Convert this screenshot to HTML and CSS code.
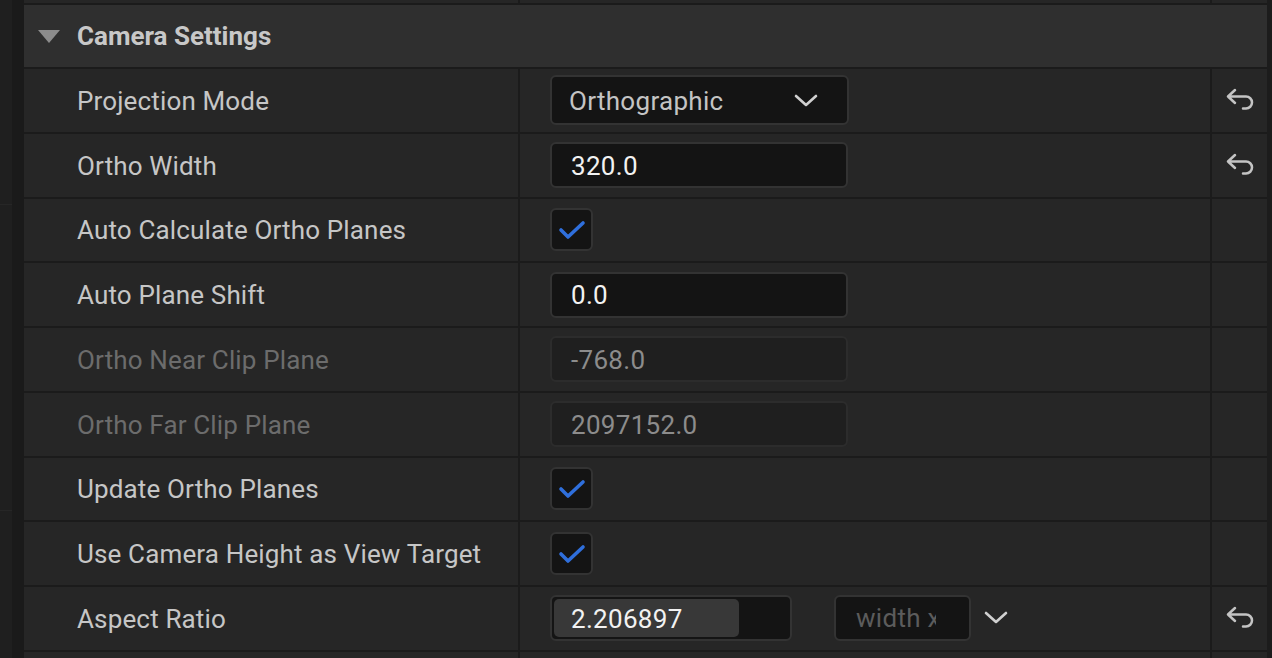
FILE: index.html
```html
<!DOCTYPE html>
<html>
<head>
<meta charset="utf-8">
<link rel="stylesheet" href="styles.css">
</head>
<body>
<div class="app">
  <div class="gutter"><div class="gutter-inner"></div></div>
  <div class="panel">
    <div class="row row-stub"><div class="cell"></div><div class="cell"></div><div class="cell"></div></div>
    <div class="header">
      <svg class="caret" width="24" height="15" viewBox="0 0 24 15"><polygon points="1,1 23,1 12,14" fill="#8c8c8c"/></svg>
      <span class="header-title">Camera Settings</span>
    </div>

    <div class="row">
      <div class="cell label">Projection Mode</div>
      <div class="cell value">
        <div class="combo"><span>Orthographic</span>
          <svg class="chev" width="24" height="14" viewBox="0 0 24 14"><polyline points="2,2 12,11 22,2" fill="none" stroke="#d0d0d0" stroke-width="2.6" stroke-linecap="round" stroke-linejoin="round"/></svg>
        </div>
      </div>
      <div class="cell reset">
        <svg width="30" height="24" viewBox="0 0 30 24"><path d="M9 2 L2 8.5 L9 15 M2 8.5 H20 A6 6 0 0 1 20 20.5 H17" fill="none" stroke="#c4c4c4" stroke-width="2.5" stroke-linecap="round" stroke-linejoin="round"/></svg>
      </div>
    </div>

    <div class="row">
      <div class="cell label">Ortho Width</div>
      <div class="cell value"><div class="field">320.0</div></div>
      <div class="cell reset">
        <svg width="30" height="24" viewBox="0 0 30 24"><path d="M9 2 L2 8.5 L9 15 M2 8.5 H20 A6 6 0 0 1 20 20.5 H17" fill="none" stroke="#c4c4c4" stroke-width="2.5" stroke-linecap="round" stroke-linejoin="round"/></svg>
      </div>
    </div>

    <div class="row">
      <div class="cell label">Auto Calculate Ortho Planes</div>
      <div class="cell value"><div class="check"><svg width="28" height="22" viewBox="0 0 28 22"><polyline points="3,11 10,18 25,4" fill="none" stroke="#2f6fdc" stroke-width="3.6" stroke-linecap="round" stroke-linejoin="round"/></svg></div></div>
      <div class="cell"></div>
    </div>

    <div class="row">
      <div class="cell label">Auto Plane Shift</div>
      <div class="cell value"><div class="field">0.0</div></div>
      <div class="cell"></div>
    </div>

    <div class="row">
      <div class="cell label disabled">Ortho Near Clip Plane</div>
      <div class="cell value"><div class="field field-disabled">-768.0</div></div>
      <div class="cell"></div>
    </div>

    <div class="row">
      <div class="cell label disabled">Ortho Far Clip Plane</div>
      <div class="cell value"><div class="field field-disabled">2097152.0</div></div>
      <div class="cell"></div>
    </div>

    <div class="row">
      <div class="cell label">Update Ortho Planes</div>
      <div class="cell value"><div class="check"><svg width="28" height="22" viewBox="0 0 28 22"><polyline points="3,11 10,18 25,4" fill="none" stroke="#2f6fdc" stroke-width="3.6" stroke-linecap="round" stroke-linejoin="round"/></svg></div></div>
      <div class="cell"></div>
    </div>

    <div class="row">
      <div class="cell label">Use Camera Height as View Target</div>
      <div class="cell value"><div class="check"><svg width="28" height="22" viewBox="0 0 28 22"><polyline points="3,11 10,18 25,4" fill="none" stroke="#2f6fdc" stroke-width="3.6" stroke-linecap="round" stroke-linejoin="round"/></svg></div></div>
      <div class="cell"></div>
    </div>

    <div class="row">
      <div class="cell label">Aspect Ratio</div>
      <div class="cell value aspect">
        <div class="slider"><div class="slider-fill"></div><span class="slider-text">2.206897</span></div>
        <div class="preset"><span>width x height</span></div>
        <svg class="chev2" width="24" height="14" viewBox="0 0 24 14"><polyline points="2,2 12,11 22,2" fill="none" stroke="#d0d0d0" stroke-width="2.6" stroke-linecap="round" stroke-linejoin="round"/></svg>
      </div>
      <div class="cell reset">
        <svg width="30" height="24" viewBox="0 0 30 24"><path d="M9 2 L2 8.5 L9 15 M2 8.5 H20 A6 6 0 0 1 20 20.5 H17" fill="none" stroke="#c4c4c4" stroke-width="2.5" stroke-linecap="round" stroke-linejoin="round"/></svg>
      </div>
    </div>

    <div class="row row-stub"><div class="cell"></div><div class="cell"></div><div class="cell"></div></div>
  </div>
  <div class="edge"></div>
</div>
</body>
</html>
```

FILE: styles.css
```css
html, body {
  margin: 0;
  padding: 0;
  background: #1b1b1b;
  width: 1272px;
  height: 658px;
  overflow: hidden;
  font-family: Roboto, "Noto Sans", sans-serif;
}

.app {
  display: flex;
  width: 1272px;
  height: 658px;
}

.gutter {
  width: 24px;
  flex: none;
  background:
    linear-gradient(#262626, #262626) 0 204px / 12px 1px no-repeat,
    linear-gradient(#262626, #262626) 0 510px / 12px 1px no-repeat,
    #1f1f1f;
  display: flex;
  justify-content: flex-end;
}

.gutter-inner {
  width: 12px;
  background: #1a1a1a;
}

.panel {
  width: 1243px;
  flex: none;
  display: flex;
  flex-direction: column;
  gap: 2px;
  background: #1b1b1b;
}

.edge {
  flex: 1;
  background: #1c1c1c;
}

.row {
  display: grid;
  grid-template-columns: 494px 690px 55px;
  column-gap: 2px;
  height: 62.75px;
  flex: none;
}

.row-stub {
  height: 3px;
}

.row:last-child {
  height: 10px;
}

.cell {
  background: #262626;
  display: flex;
  align-items: center;
  min-width: 0;
}

.header {
  height: 62px;
  flex: none;
  background: #2f2f2f;
  display: flex;
  align-items: center;
}

.caret {
  margin-left: 13px;
  margin-top: 1px;
}

.header-title {
  margin-left: 16px;
  font-size: 26px;
  font-weight: 700;
  color: #c8c8c8;
}

.label {
  padding-left: 53px;
  font-size: 26px;
  letter-spacing: 0.15px;
  color: #c6c6c6;
  white-space: nowrap;
  padding-top: 1px;
}

.label.disabled {
  color: #6c6c6c;
}

.value {
  padding-left: 30px;
}

.combo {
  width: 299px;
  height: 50px;
  box-sizing: border-box;
  border: 2px solid #333333;
  border-radius: 6px;
  background: #141414;
  display: flex;
  align-items: center;
  justify-content: space-between;
  padding: 1px 29px 0 17px;
  font-size: 26px;
  letter-spacing: 0.3px;
  color: #c4c4c4;
}

.field {
  width: 298px;
  height: 46px;
  box-sizing: border-box;
  border: 2px solid #333333;
  border-radius: 6px;
  background: #141414;
  display: flex;
  align-items: center;
  padding: 1px 0 0 19px;
  font-size: 26px;
  letter-spacing: 0.3px;
  color: #f2f2f2;
}

.field-disabled {
  background: #1f1f1f;
  border-color: #2c2c2c;
  color: #8c8c8c;
}

.check {
  width: 43px;
  height: 43px;
  box-sizing: border-box;
  border: 2px solid #333333;
  border-radius: 6px;
  background: #141414;
  display: flex;
  align-items: center;
  justify-content: center;
}

.check svg {
  margin-top: 1px;
}

.slider {
  position: relative;
  width: 242px;
  height: 46px;
  box-sizing: border-box;
  border: 2px solid #333333;
  border-radius: 6px;
  background: #141414;
  display: flex;
  align-items: center;
  padding: 1px 0 0 19px;
}

.slider-fill {
  position: absolute;
  left: 2px;
  top: 2px;
  bottom: 2px;
  width: 185px;
  background: #383838;
  border-radius: 5px;
}

.slider-text {
  position: relative;
  font-size: 26px;
  letter-spacing: 0.3px;
  color: #f2f2f2;
}

.preset {
  margin-left: 42px;
  width: 137px;
  height: 46px;
  box-sizing: border-box;
  border: 2px solid #333333;
  border-radius: 6px;
  background: #141414;
  display: flex;
  align-items: center;
  padding-left: 20px;
  overflow: hidden;
}

.preset span {
  display: block;
  width: 80px;
  overflow: hidden;
  white-space: nowrap;
  font-size: 26px;
  letter-spacing: 0.3px;
  color: #5c5c5c;
}

.chev2 {
  margin-left: 13px;
}

.reset {
  justify-content: center;
  padding-left: 3px;
}
```
